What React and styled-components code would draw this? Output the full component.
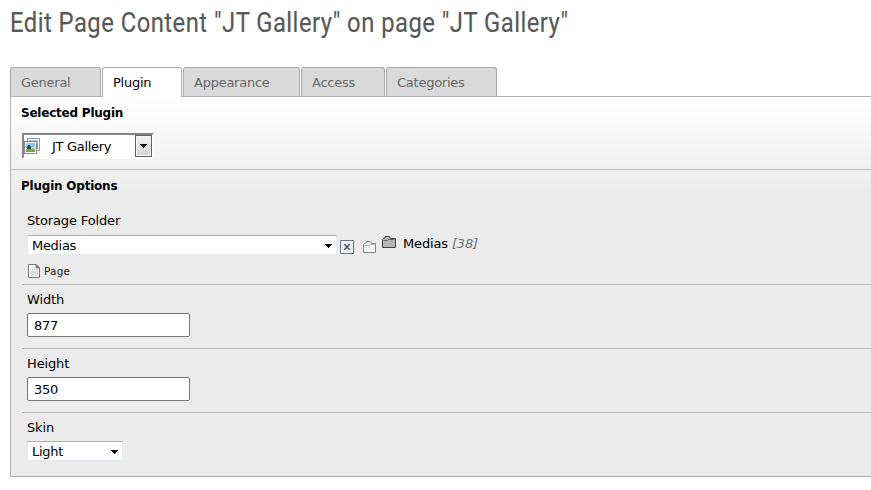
import React from 'react';
import styled, { createGlobalStyle } from 'styled-components';

const Global = createGlobalStyle`
  * { box-sizing: border-box; }
  body { margin: 0; background: #fff; overflow: hidden; }
`;
const Page = styled.main`
  height: 490px;
  padding: 4px 0 0 10px;
  font: 13px/16px "DejaVu Sans", Verdana, sans-serif;
  letter-spacing: -0.15px;
  color: #000;
  white-space: nowrap;
`;
const Title = styled.h1`
  margin: 0;
  height: 63px;
  width: max-content;
  font: 400 28px/38px Roboto, sans-serif;
  letter-spacing: 0.56px;
  color: #585858;
  -webkit-text-stroke: 0.15px #585858;
  transform: scaleX(0.85);
  transform-origin: 0 0;
`;
const Tabs = styled.nav`
  display: flex;
  gap: 1px;
  height: 29px;
`;
const Tab = styled.div`
  width: ${(p) => p.$w}px;
  height: ${(p) => (p.$active ? 30 : 29)}px;
  padding: 7px 0 0 10px;
  border: 1px solid #a9a9a9;
  border-bottom: 0;
  border-radius: 3px 3px 0 0;
  background: ${(p) => (p.$active ? '#fff' : '#dadada')};
  color: ${(p) => (p.$active ? '#000' : '#666')};
  letter-spacing: -0.25px;
  z-index: 1;
`;
const Panel = styled.section`
  height: 381px;
  border: 1px solid #b1b1b1;
  border-right: 0;
  background: linear-gradient(#fff, #ebebeb 100px);
`;
const Selected = styled.div`
  height: 73px;
  padding: 8px 0 0 10px;
  border-bottom: 1px solid #b9b9b9;
`;
const Heading = styled.h2`
  margin: 0;
  font: 700 12px/16px "DejaVu Sans", Verdana, sans-serif;
  letter-spacing: -0.22px;
`;
const PluginSelect = styled.div`
  display: flex;
  align-items: center;
  width: 132px;
  height: 26px;
  margin: 12px 0 0 1px;
  border: 2px solid #fff;
  border-top-color: #858585;
  border-left-color: #858585;
  background: #fff;
`;
const PluginName = styled.span`
  flex: 1;
  padding: 1px 0 0 12px;
  letter-spacing: -0.3px;
`;
const ArrowButton = styled.span`
  display: flex;
  align-items: center;
  justify-content: center;
  width: 17px;
  height: 22px;
  border: 1px solid #606060;
  background: linear-gradient(#f4f4f4, #d5d5d5);
  box-shadow: inset 0 0 0 1px #f6f6f6;
`;
const Options = styled.div`
  padding: 8px 0 0 10px;
`;
const Field = styled.div`
  height: ${(p) => p.$h}px;
  margin-left: 1px;
  padding: ${(p) => p.$top}px 0 0 5px;
  border-bottom: ${(p) => (p.$last ? 0 : 1)}px solid #b9b9b9;
`;
const Label = styled.div`
  height: 16px;
`;
const Input = styled.div`
  width: 163px;
  height: 24px;
  margin-top: 5px;
  padding: 4px 0 0 6px;
  border: 1px solid #777;
  border-radius: 2px;
  background: #fff;
  letter-spacing: -0.3px;
`;
const Select = styled.div`
  display: flex;
  align-items: center;
  justify-content: space-between;
  width: ${(p) => p.$w}px;
  height: 20px;
  padding: 2px 4px 0;
  border: 1px solid #e3e9ef;
  border-top-color: #abadb3;
  background: #fff;
  letter-spacing: -0.3px;
`;
const SkinSelect = styled(Select)`
  margin-top: 5px;
`;
const Row = styled.div`
  display: flex;
  height: 20px;
  margin-top: 6px;
`;
const Slot = styled.span`
  display: block;
  flex: none;
  height: 16px;
  margin: ${(p) => p.$top}px 0 0 ${(p) => p.$left}px;
  svg { display: block; }
`;
const Count = styled.em`
  color: #717171;
`;
const PageLink = styled.div`
  display: flex;
  align-items: center;
  height: 16px;
  margin-top: 8px;
  padding-left: 1px;
  gap: 4px;
  font-size: 10.5px;
  letter-spacing: 0.2px;
  color: #222;
`;

const Arrow = () => (
  <svg width="7" height="4" shapeRendering="crispEdges">
    <path d="M0 0h7v1H0zM1 1h5v1H1zM2 2h3v1H2zM3 3h1v1H3z" />
  </svg>
);
const Gallery = () => (
  <svg width="16" height="16" shapeRendering="crispEdges">
    <path d="M3.5.5h12v12h-12z" fill="#fff" stroke="#999" />
    <path d="M5 2h9v4H5z" fill="#9cc9ee" />
    <path d="M5 6h9v5H5z" fill="#7fae61" />
    <path d="M.5 3.5h12v12H.5z" fill="#fff" stroke="#888" />
    <path d="M2 5h9v5H2z" fill="#8fc5ee" />
    <path d="M2 11h9v3H2z" fill="#6fab3f" />
    <path d="M3 8h4v3H3zM4 7h2v1H4z" fill="#1d4f58" />
    <path d="M7 9h4v2H7z" fill="#c2d9a5" />
  </svg>
);
const Clear = () => (
  <svg width="14" height="14">
    <path d="M.5.5h13v13H.5z" fill="#e9edf3" stroke="#68758b" />
    <path d="M1.5 12.5v-11h11" fill="none" stroke="#fff" />
    <path d="M4.3 4.3l5.4 5.4M9.7 4.3l-5.4 5.4" stroke="#4c5157" strokeWidth="1.4" />
  </svg>
);
const Folder = ({ fill, stroke, shade, w }) => (
  <svg width={w} height="12">
    <path d={`M.5 11.5v-8l1-1h1l1-2h4l1 2h${w - 9}v9z`} fill={fill} stroke={stroke} />
    <path d={`M1.5 4.5h4l1-1h${w - 8}`} fill="none" stroke={shade} />
  </svg>
);
const Sheet = () => (
  <svg width="12" height="14">
    <path d="M.5.5h7.5l3.5 3.5v9.5H.5z" fill="#fafafa" stroke="#777" />
    <path d="M8 .5V4h3.5z" fill="#777" stroke="#777" strokeWidth=".6" />
    <path d="M2 5.5h7" stroke="#bbb" strokeDasharray="1 1" />
    <path d="M2 7h8v5H2z" fill="#ddd" />
  </svg>
);

export default function App() {
  return (
    <Page>
      <Global />
      <Title>Edit Page Content "JT Gallery" on page "JT Gallery"</Title>
      <Tabs>
        <Tab $w={91}>General</Tab>
        <Tab $w={80} $active>Plugin</Tab>
        <Tab $w={117}>Appearance</Tab>
        <Tab $w={84}>Access</Tab>
        <Tab $w={111}>Categories</Tab>
      </Tabs>
      <Panel>
        <Selected>
          <Heading>Selected Plugin</Heading>
          <PluginSelect>
            <Gallery />
            <PluginName>JT Gallery</PluginName>
            <ArrowButton><Arrow /></ArrowButton>
          </PluginSelect>
        </Selected>
        <Options>
          <Heading>Plugin Options</Heading>
          <Field $h={91} $top={19}>
            <Label>Storage Folder</Label>
            <Row>
              <Select $w={310}>Medias<Arrow /></Select>
              <Slot $left={3} $top={5}><Clear /></Slot>
              <Slot $left={9} $top={6}>
                <Folder w={13} fill="#f5f7fb" stroke="#7b8494" shade="#a9b1bf" />
              </Slot>
              <Slot $left={6} $top={1}>
                <Folder w={14} fill="#b4b4b4" stroke="#444" shade="#666" />
              </Slot>
              <Slot $left={7} $top={1}>Medias <Count>[38]</Count></Slot>
            </Row>
            <PageLink><Sheet />Page</PageLink>
          </Field>
          <Field $h={64} $top={7}>
            <Label>Width</Label>
            <Input>877</Input>
          </Field>
          <Field $h={64} $top={7}>
            <Label>Height</Label>
            <Input>350</Input>
          </Field>
          <Field $h={60} $top={7} $last>
            <Label>Skin</Label>
            <SkinSelect $w={96}>Light<Arrow /></SkinSelect>
          </Field>
        </Options>
      </Panel>
    </Page>
  );
}
